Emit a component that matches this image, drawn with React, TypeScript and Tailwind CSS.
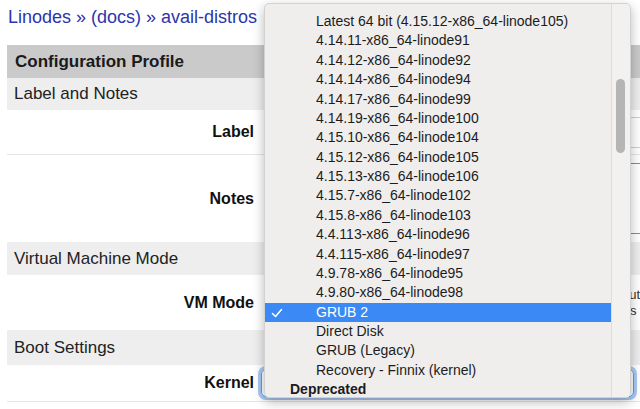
import React from "react";

const KERNELS = [
  "Latest 64 bit (4.15.12-x86_64-linode105)",
  "4.14.11-x86_64-linode91",
  "4.14.12-x86_64-linode92",
  "4.14.14-x86_64-linode94",
  "4.14.17-x86_64-linode99",
  "4.14.19-x86_64-linode100",
  "4.15.10-x86_64-linode104",
  "4.15.12-x86_64-linode105",
  "4.15.13-x86_64-linode106",
  "4.15.7-x86_64-linode102",
  "4.15.8-x86_64-linode103",
  "4.4.113-x86_64-linode96",
  "4.4.115-x86_64-linode97",
  "4.9.78-x86_64-linode95",
  "4.9.80-x86_64-linode98",
];

const OTHERS = ["Direct Disk", "GRUB (Legacy)", "Recovery - Finnix (kernel)"];

function SectionRow({ title, h }: { title: string; h: string }) {
  return (
    <div className={`flex items-center bg-[#eeeeee] pl-[7px] text-[17px] text-[#222] ${h}`}>
      {title}
    </div>
  );
}

function FieldRow({
  label,
  h,
  border,
  children,
}: {
  label: string;
  h: string;
  border?: boolean;
  children?: React.ReactNode;
}) {
  return (
    <div className={`flex items-center ${h} ${border ? "border-b border-[#e6e6e6]" : ""}`}>
      <div className="w-[247px] shrink-0 text-right text-[16px] font-bold text-[#111]">{label}</div>
      <div className="ml-[5px] flex-1">{children}</div>
    </div>
  );
}

function Check() {
  return (
    <svg width="12" height="10" viewBox="0 0 12 10" fill="none" stroke="white" strokeWidth="1.6" strokeLinecap="round" strokeLinejoin="round">
      <polyline points="1.5 5.5 4.5 8.5 10.5 1.5" />
    </svg>
  );
}

export default function App() {
  return (
    <div className="relative h-[409px] w-full overflow-hidden bg-white font-['Liberation_Sans',Arial,sans-serif]">
      <div className="pl-[8px] pt-[6px] text-[18px] leading-[22px] text-[#2b35ad]">
        Linodes » (docs) » avail-distros
      </div>

      <div className="ml-[7px] mt-[17px] w-[700px]">
        <div className="flex h-[33px] items-center bg-[#cacaca] pl-[8px] text-[17px] font-bold text-[#1a1a1a]">
          Configuration Profile
        </div>
        <SectionRow title="Label and Notes" h="h-[32px]" />
        <FieldRow label="Label" h="h-[45px]" border>
          <div className="ml-[14px] h-[31px] w-[420px] border border-[#cfcfcf]" />
        </FieldRow>
        <FieldRow label="Notes" h="h-[87px]">
          <div className="ml-[14px] h-[71px] w-[420px] border border-[#8a8a8a]" />
        </FieldRow>
        <SectionRow title="Virtual Machine Mode" h="h-[33px]" />
        <FieldRow label="VM Mode" h="h-[55px]">
          <div className="ml-[40px] whitespace-nowrap text-[13px] leading-[16px] text-[#333]">
            <div>Paravirtualization is fast and runs most distributions without issue; stay in pvol</div>
            <div>Full virtualization allows custom kernels and other systems to boot, virtual machin</div>
          </div>
        </FieldRow>
        <SectionRow title="Boot Settings" h="h-[35px]" />
        <FieldRow label="Kernel" h="h-[37px]" border>
          <div className="ml-[2px] h-[28px] w-[373px] rounded-[5px] border border-[#5b9bef] shadow-[0_0_0_3px_#a9c9f5]" />
        </FieldRow>
      </div>

      <div className="absolute left-[264px] top-[3px] flex h-[395px] w-[367px] overflow-hidden rounded-[5px] border border-[#d2d2d2] bg-[#efeeed] shadow-[0_4px_12px_rgba(0,0,0,0.28)]">
        <div className="flex-1 pt-[8px] text-[14px] leading-[19.37px] text-[#1c1c1c]">
          {KERNELS.map((k) => (
            <div key={k} className="pl-[51px]">
              {k}
            </div>
          ))}
          <div className="relative bg-[#3b89f5] pl-[51px] text-white">
            <span className="absolute left-[6px] top-[5px]">
              <Check />
            </span>
            GRUB 2
          </div>
          {OTHERS.map((k) => (
            <div key={k} className="pl-[51px]">
              {k}
            </div>
          ))}
          <div className="pl-[25px] font-bold">Deprecated</div>
        </div>
        <div className="relative w-[19px] shrink-0 border-l border-[#dddddd] bg-[#f2f1f0]">
          <div className="absolute left-[4px] top-[75px] h-[74px] w-[9px] rounded-full bg-[#b5b5b5]" />
        </div>
      </div>
    </div>
  );
}
